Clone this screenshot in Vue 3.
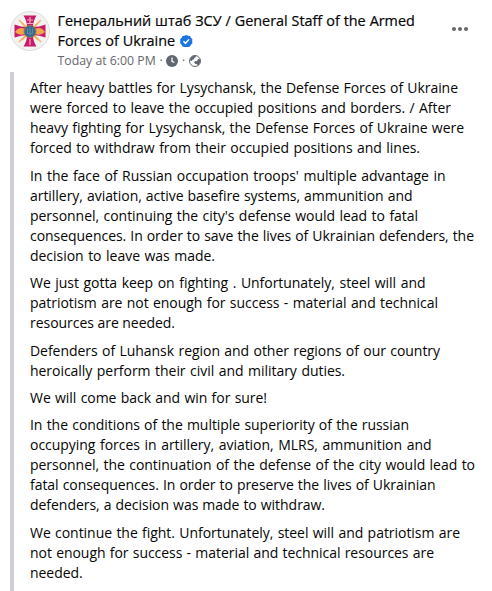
<template>
  <article class="post">
    <header class="header">
      <svg class="avatar" viewBox="0 0 40 40">
        <circle cx="20" cy="20" r="19.5" fill="#f3f2f1" stroke="#dcdcdc" />
        <path d="M9 9 L31 31 M31 9 L9 31" stroke="#e9b565" stroke-width="1.4" />
        <path
          d="M13.500 4.500 H26.500 Q23 10 23 16 Q29 16 35.500 13.500 V26.500 Q29 24 23 24 Q23 30 26.500 35.500 H13.500 Q17 30 17 24 Q11 24 4.500 26.500 V13.500 Q11 16 17 16 Q17 10 13.500 4.500 Z"
          fill="#c51b6c"
        />
        <path d="M5 21 Q9 15 15 18 V23 Q9 25 5 21 Z M35 21 Q31 15 25 18 V23 Q31 25 35 21 Z" fill="#f3a548" />
        <path d="M12 12 L16 16 M28 12 L24 16 M12 29 L16 25 M28 29 L24 25" stroke="#f0b45c" stroke-width="1.6" />
        <path d="M20 6 V13 M17 9 H23 M17 12.5 H23 M20 28 V34" stroke="#eda7b8" stroke-width="1.2" />
        <circle cx="20" cy="20.5" r="6" fill="#376a91" stroke="#a4784b" />
        <path d="M17.500 17.500 V22.500 H22.500 V17.500 M20 16.500 V24.500" fill="none" stroke="#6389a0" />
      </svg>
      <div class="info">
        <div class="name">
          Генеральний штаб ЗСУ / General Staff of the Armed<br />
          Forces of Ukraine<svg class="verified" viewBox="0 0 12 12">
            <path
              d="M6 0 L7.700 .6 L9.600 .9 L10.400 2.700 L11.900 4 L11.700 6 L11.900 8 L10.400 9.300 L9.600 11.100 L7.700 11.400 L6 12 L4.300 11.400 L2.400 11.100 L1.600 9.300 L.1 8 L.3 6 L.1 4 L1.600 2.700 L2.400 .9 L4.300 .6 Z"
              fill="#1b74e4"
            />
            <path d="M3.300 6.100 L5.200 8 L8.700 4.200" fill="none" stroke="#fff" stroke-width="1.400" />
          </svg>
        </div>
        <div class="meta">
          <span class="time">Today at 6:00 PM</span>
          <span class="dot">·</span>
          <svg class="icon" viewBox="0 0 12 12">
            <circle cx="6" cy="6" r="6" fill="#606770" />
            <path d="M6 2.500 V6.300 L8.300 7.500" fill="none" stroke="#fff" stroke-width="1.300" />
          </svg>
          <span class="dot">·</span>
          <svg class="icon" viewBox="0 0 12 12">
            <circle cx="6" cy="6" r="5.500" fill="#fff" stroke="#606770" />
            <path d="M1 5.500 Q1 1 6.500 .8 L7 2 L5.500 2.800 L5 4.200 L3.300 4.800 L3 6 Z" fill="#606770" />
            <path d="M5 7 L6.500 6 L8 6.200 L9 4 L11 4.200 Q12 8 9 10.700 L8 9.200 L6 8.800 Z" fill="#606770" />
          </svg>
        </div>
      </div>
      <svg class="more" viewBox="0 0 16 4">
        <circle cx="2" cy="2" r="2" />
        <circle cx="8" cy="2" r="2" />
        <circle cx="14" cy="2" r="2" />
      </svg>
    </header>

    <div class="quote">
      <p v-for="(lines, i) in paragraphs" :key="i">
        <span v-for="[text, width] in lines" :key="text" class="line" :style="{ width: width + 'px' }">{{ text }}</span>
      </p>
    </div>
  </article>
</template>

<script setup>
// [text, line width]
const paragraphs = [
  [
    ['After heavy battles for Lysychansk, the Defense Forces of Ukraine', 428],
    ['were forced to leave the occupied positions and borders. / After', 421],
    ['heavy fighting for Lysychansk, the Defense Forces of Ukraine were', 434],
    ['forced to withdraw from their occupied positions and lines.', 390],
  ],
  [
    ["In the face of Russian occupation troops' multiple advantage in", 415.5],
    ['artillery, aviation, active basefire systems, ammunition and', 382.5],
    ["personnel, continuing the city's defense would lead to fatal", 388],
    ['consequences. In order to save the lives of Ukrainian defenders, the', 444],
    ['decision to leave was made.', 185],
  ],
  [
    ['We just gotta keep on fighting . Unfortunately, steel will and', 395.5],
    ['patriotism are not enough for success - material and technical', 408],
    ['resources are needed.', 145],
  ],
  [
    ['Defenders of Luhansk region and other regions of our country', 410],
    ['heroically perform their civil and military duties.', 315],
  ],
  [['We will come back and win for sure!', 237]],
  [
    ['In the conditions of the multiple superiority of the russian', 379],
    ['occupying forces in artillery, aviation, MLRS, ammunition and', 401.5],
    ['personnel, the continuation of the defense of the city would lead to', 445],
    ['fatal consequences. In order to preserve the lives of Ukrainian', 405.5],
    ['defenders, a decision was made to withdraw.', 295],
  ],
  [
    ['We continue the fight. Unfortunately, steel will and patriotism are', 430],
    ['not enough for success - material and technical resources are', 404],
    ['needed.', 53],
  ],
];
</script>

<style>
body {
  background: #fff;
}
</style>

<style scoped>
.post {
  box-sizing: border-box;
  height: 591px;
  padding: 11px 0 0 10px;
  overflow: hidden;
  font-family: 'Open Sans', 'Noto Sans', sans-serif;
  color: #050505;
}

.header {
  display: flex;
  height: 61px;
}

.avatar {
  width: 40px;
  height: 40px;
  flex: none;
}

.info {
  flex: 1;
  padding-left: 7.5px;
  white-space: nowrap;
}

.name {
  height: 40px;
  font-size: 14.4px;
  line-height: 20px;
  word-spacing: 0.2px;
  -webkit-text-stroke: 0.2px #050505;
}

.verified {
  width: 12.5px;
  height: 12.5px;
  margin-left: 5px;
  vertical-align: -1px;
}

.meta {
  display: flex;
  align-items: center;
  height: 19px;
  font-size: 12.3px;
  color: #65676b;
}

.dot {
  width: 10.5px;
  text-align: center;
}

.icon {
  width: 12px;
  height: 12px;
}

.more {
  width: 16px;
  height: 4px;
  margin: 16px 24px 0 0;
  fill: #65676b;
}

.quote {
  height: 519px;
  padding: 6.2px 0 0 16px;
  border-left: 4px solid #ced0d4;
  font-size: 14px;
  line-height: 20px;
}

p {
  margin: 0 0 7.45px;
}

.line {
  display: block;
  height: 20px;
  letter-spacing: -0.04px;
  white-space: nowrap;
  text-align-last: justify;
}
</style>
